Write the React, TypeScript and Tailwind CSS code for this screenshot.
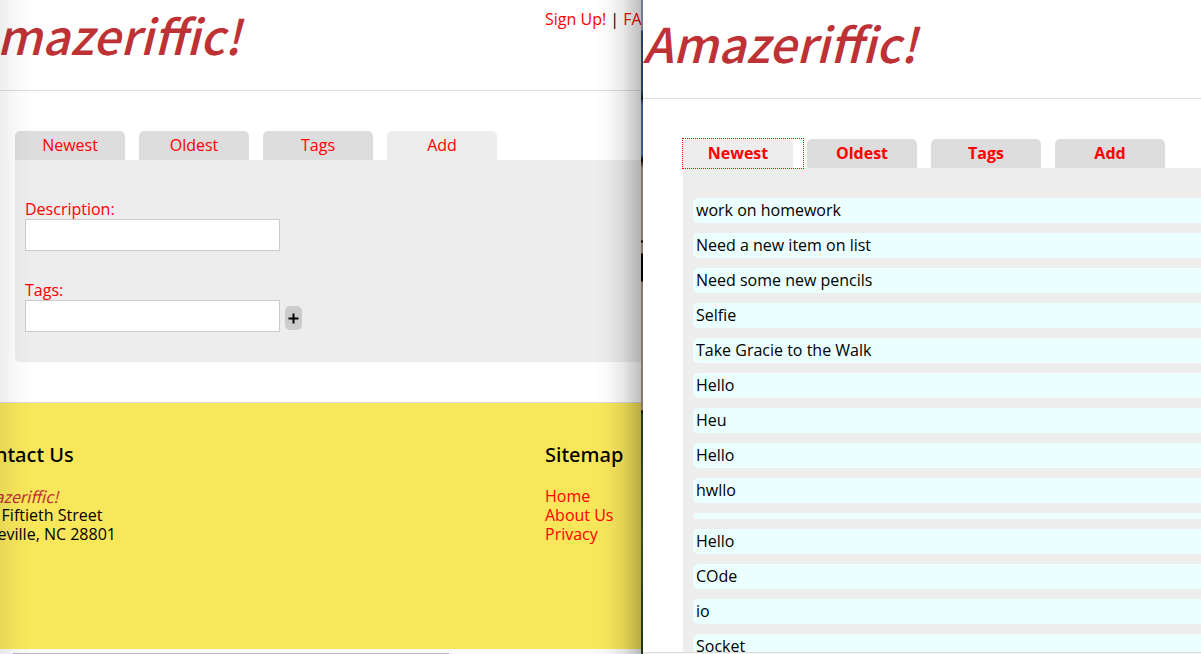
import { useState } from "react";

const tabNames = ["Newest", "Oldest", "Tags", "Add"];

const todos = [
  "work on homework",
  "Need a new item on list",
  "Need some new pencils",
  "Selfie",
  "Take Gracie to the Walk",
  "Hello",
  "Heu",
  "Hello",
  "hwllo",
  "",
  "Hello",
  "COde",
  "io",
  "Socket",
];

function Logo() {
  return (
    <h1 className="font-['Noto_Sans_CJK_SC',sans-serif] text-[48px] leading-[56px] font-medium whitespace-nowrap text-[#be3135] italic">
      Amazeriffic!
    </h1>
  );
}

function Tabs({ initial, bold }: { initial: string; bold?: boolean }) {
  const [active, setActive] = useState(initial);
  return (
    <nav className="flex gap-[14px]">
      {tabNames.map((name) => (
        <button
          key={name}
          type="button"
          onClick={() => setActive(name)}
          className={`relative h-[29px] w-[110px] shrink-0 rounded-t-[5px] pb-px leading-[19px] text-[#f00] ${
            bold ? "font-bold" : ""
          } ${active === name ? "bg-[#ededed]" : "bg-[#ddd]"}`}
        >
          {name}
          {bold && active === name && (
            <span className="absolute inset-y-0 -right-[10px] left-0 outline-1 outline-[#f00] outline-dotted" />
          )}
        </button>
      ))}
    </nav>
  );
}

function AddWindow() {
  return (
    <section className="relative flex w-[641px] shrink-0 flex-col overflow-hidden bg-white">
      <header className="-ml-[33px] flex h-[91px] shrink-0 justify-between border-b border-[#ddd] pt-[10px]">
        <div className="-mt-1">
          <Logo />
        </div>
        <nav className="mr-[-29px] w-[125px] shrink-0 leading-[19px] whitespace-nowrap">
          <a href="#signup" className="text-[#f00]">Sign Up!</a>
          {" | "}
          <a href="#faq" className="text-[#f00]">FAQ</a>
        </nav>
      </header>
      <main className="shrink-0 pt-10 pb-10 pl-[15px]">
        <Tabs initial="Add" />
        <form
          className="flex flex-col gap-[30px] rounded-bl-[5px] bg-[#ededed] pt-10 pb-[30px] pl-[10px]"
          onSubmit={(e) => e.preventDefault()}
        >
          <div>
            <label htmlFor="description" className="block leading-[19px] text-[#f00]">Description:</label>
            <input id="description" className="block h-8 w-[255px] border border-[#ccc] bg-white px-2" />
          </div>
          <div>
            <label htmlFor="tags" className="block leading-[19px] text-[#f00]">Tags:</label>
            <div className="flex items-end gap-[5px]">
              <input id="tags" className="block h-8 w-[255px] border border-[#ccc] bg-white px-2" />
              <button
                type="submit"
                aria-label="Add item"
                className="mb-[2px] flex h-6 w-[17px] items-center justify-center rounded-[5px] bg-[#ccc]"
              >
                <svg viewBox="0 0 11 11" className="h-[11px] w-[11px]" aria-hidden="true">
                  <path d="M5.5 0.5v10M0.5 5.5h10" stroke="#000" strokeWidth="2" />
                </svg>
              </button>
            </div>
          </div>
        </form>
      </main>
      <footer className="-ml-[30px] flex h-[247px] shrink-0 justify-between border-t border-[#dcdce0] bg-[#f9e75b] pt-10 leading-[19px] whitespace-nowrap">
        <div>
          <h2 className="mb-5 font-['Noto_Sans'] text-[20px] leading-6 font-medium">Contact Us</h2>
          <p className="font-['Noto_Sans_CJK_SC',sans-serif] text-[16px] text-[#be3135] italic">Amazeriffic!</p>
          <p>135 Fiftieth Street</p>
          <p>Asheville, NC 28801</p>
        </div>
        <div className="w-24">
          <h2 className="mb-5 font-['Noto_Sans'] text-[20px] leading-6 font-medium">Sitemap</h2>
          <ul className="text-[#f00]">
            <li><a href="#home">Home</a></li>
            <li><a href="#about">About Us</a></li>
            <li><a href="#privacy">Privacy</a></li>
          </ul>
        </div>
      </footer>
      <div className="flex flex-1 items-end bg-[#fafafa] pl-[13px]">
        <div className="h-px w-[436px] bg-[#bbb]" />
      </div>
      <div className="pointer-events-none absolute inset-y-0 left-0 w-9 bg-[linear-gradient(to_right,rgba(0,0,0,0.065),rgba(0,0,0,0.02)_50%,transparent)]" />
      <div className="pointer-events-none absolute inset-y-0 right-0 w-12 bg-[linear-gradient(to_right,transparent,rgba(0,0,0,0.02)_30%,rgba(0,0,0,0.09)_62%,rgba(0,0,0,0.26))]" />
    </section>
  );
}

function ListWindow() {
  return (
    <section className="flex min-w-0 flex-1 flex-col overflow-hidden bg-white">
      <header className="h-[99px] shrink-0 border-b border-[#ddd] pt-[14px]">
        <Logo />
      </header>
      <main className="flex min-h-0 flex-1 flex-col overflow-hidden pt-10 pl-10">
        <Tabs initial="Newest" bold />
        <ul className="flex flex-1 flex-col gap-[10px] bg-[#ededed] pt-[30px] pl-[10px]">
          {todos.map((todo, i) => (
            <li key={i} className="shrink-0 rounded-l-[5px] bg-[#ebffff] p-[3px] leading-[19px]">
              {todo}
            </li>
          ))}
        </ul>
      </main>
      <div className="h-[2px] shrink-0 border-t border-[#ddd] bg-[#f5f5f5]" />
    </section>
  );
}

export default function App() {
  return (
    <div className="flex h-screen overflow-hidden font-['Open_Sans','Noto_Sans',sans-serif] text-[16px] text-black">
      <AddWindow />
      <div className="w-[2px] shrink-0 bg-[linear-gradient(to_bottom,#777b91_0,#777b91_30px,#27405f_31px,#27405f_90px,#101820_98px,#3b5688_104px,#3b5688_155px,#000_160px,#89766c_168px,#89766c_240px,#000_241px,#000_242px,#89766c_243px,#89766c_253px,#000_254px,#000_281px,#89766c_282px,#89766c_410px,#000_411px,#243d18_414px,#34501d_540px,#1e3315_654px)]" />
      <ListWindow />
    </div>
  );
}
